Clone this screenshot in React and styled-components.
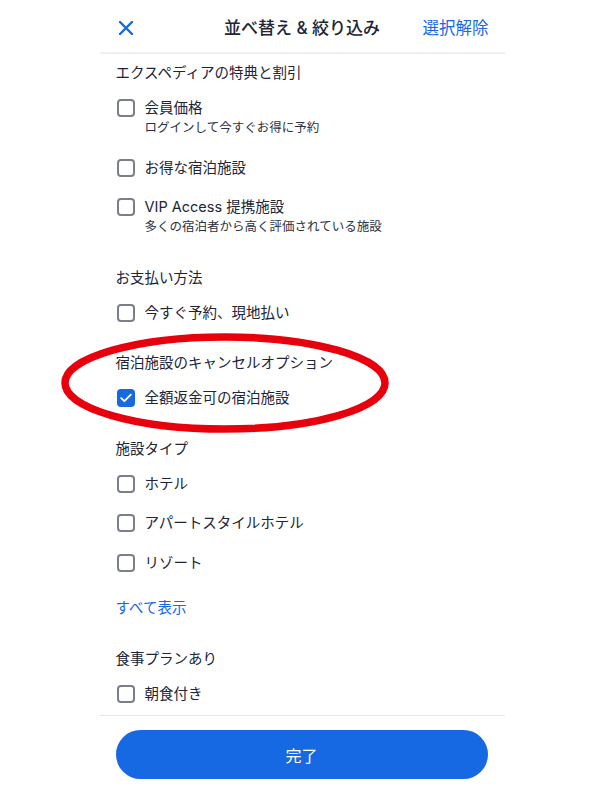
import React from 'react'
import styled, { createGlobalStyle } from 'styled-components'

const GlobalStyle = createGlobalStyle`
  html, body {
    margin: 0;
    padding: 0;
    background: #ffffff;
  }
  body {
    font-family: "Inter", "Noto Sans CJK JP", sans-serif;
    color: #202436;
    -webkit-font-smoothing: antialiased;
  }
  * { box-sizing: border-box; }
`

const BLUE = '#1668e3'

const sections = [
  {
    title: 'エクスペディアの特典と割引',
    items: [
      { label: '会員価格', sub: 'ログインして今すぐお得に予約' },
      { label: 'お得な宿泊施設' },
      { label: 'VIP Access 提携施設', sub: '多くの宿泊者から高く評価されている施設' },
    ],
  },
  {
    title: 'お支払い方法',
    items: [{ label: '今すぐ予約、現地払い' }],
  },
  {
    title: '宿泊施設のキャンセルオプション',
    items: [{ label: '全額返金可の宿泊施設', checked: true }],
  },
  {
    title: '施設タイプ',
    items: [
      { label: 'ホテル' },
      { label: 'アパートスタイルホテル' },
      { label: 'リゾート' },
    ],
    more: 'すべて表示',
  },
  {
    title: '食事プランあり',
    items: [{ label: '朝食付き' }],
  },
]

const Checkbox = ({ checked }) => (
  <Box $checked={checked}>
    {checked && (
      <svg width="12" height="10" viewBox="0 0 12 10" fill="none">
        <path d="M1.2 5.2 L4.4 8.2 L10.8 1.6" stroke="#fff" strokeWidth="1.8" strokeLinecap="round" strokeLinejoin="round" />
      </svg>
    )}
  </Box>
)

const App = () => {
  return (
    <Page>
      <GlobalStyle />
      <Panel>
        <Header>
          <CloseButton aria-label="閉じる">
            <svg width="14" height="14" viewBox="0 0 14 14" fill="none">
              <path d="M1 1 L13 13 M13 1 L1 13" stroke={BLUE} strokeWidth="2.4" strokeLinecap="round" />
            </svg>
          </CloseButton>
          <HeaderTitle>並べ替え &amp; 絞り込み</HeaderTitle>
          <ClearLink>選択解除</ClearLink>
        </Header>

        <Scroll>
          {sections.map(section => (
            <Section key={section.title}>
              <SectionTitle>{section.title}</SectionTitle>
              {section.items.map(item => (
                <Row key={item.label}>
                  <Checkbox checked={item.checked} />
                  <RowText>
                    <Label>{item.label}</Label>
                    {item.sub && <Sub>{item.sub}</Sub>}
                  </RowText>
                </Row>
              ))}
              {section.more && <MoreLink>{section.more}</MoreLink>}
            </Section>
          ))}
        </Scroll>

        <Footer>
          <DoneButton>完了</DoneButton>
        </Footer>
      </Panel>

      {/* hand-drawn highlight over the cancel option */}
      <Highlight width="334" height="106" viewBox="0 0 334 106">
        <ellipse cx="167" cy="53" rx="160" ry="46" fill="none" stroke="#e8000d" strokeWidth="7.5" />
      </Highlight>
    </Page>
  )
}

const Page = styled.div`
  position: relative;
  width: 100%;
  min-height: 804px;
`

const Panel = styled.div`
  width: 405px;
  height: 804px;
  margin: 0 auto;
  display: flex;
  flex-direction: column;
  background: #fff;
`

const Header = styled.header`
  height: 54px;
  padding: 3px 16px 0;
  display: grid;
  grid-template-columns: 1fr auto 1fr;
  align-items: center;
  border-bottom: 2px solid #efefef;
`

const CloseButton = styled.button`
  justify-self: start;
  background: none;
  border: none;
  padding: 0 0 0 3px;
  display: flex;
  align-items: center;
  cursor: pointer;
`

const HeaderTitle = styled.h1`
  margin: 0;
  font-size: 17px;
  font-weight: 500;
  line-height: 22px;
  color: #202436;
`

const ClearLink = styled.span`
  justify-self: end;
  font-size: 16.5px;
  line-height: 22px;
  color: ${BLUE};
`

const Scroll = styled.div`
  flex: 1;
  min-height: 0;
  overflow: hidden;
  padding: 0 16px;
`

const Section = styled.section`
  padding-top: 21px;

  &:first-child {
    padding-top: 9px;
  }
`

const SectionTitle = styled.h2`
  margin: 0 0 5px;
  font-size: 14.5px;
  font-weight: 400;
  line-height: 20px;
  color: #202436;
`

const Row = styled.div`
  display: flex;
  align-items: flex-start;
  gap: 10px;
  padding: 10px 0 9.5px 1px;
`

const Box = styled.span`
  flex: none;
  width: 18px;
  height: 18px;
  margin-top: 1px;
  border-radius: 4px;
  border: 2px solid ${p => (p.$checked ? BLUE : '#7b7e8b')};
  background: ${p => (p.$checked ? BLUE : '#fff')};
  display: flex;
  align-items: center;
  justify-content: center;
`

const RowText = styled.div`
  display: flex;
  flex-direction: column;
`

const Label = styled.span`
  font-size: 14.5px;
  line-height: 20px;
  color: #202436;
`

const Sub = styled.span`
  font-size: 12.5px;
  line-height: 20px;
  color: #2c3040;
`

const MoreLink = styled.div`
  margin: 16px 0 10px;
  font-size: 14.5px;
  line-height: 20px;
  color: ${BLUE};
`

const Footer = styled.footer`
  flex: none;
  border-top: 1px solid #e6e6e6;
  padding: 14px 17px 25px 16px;
`

const DoneButton = styled.button`
  width: 100%;
  height: 49px;
  border: none;
  border-radius: 25px;
  background: ${BLUE};
  color: #fff;
  font-family: inherit;
  font-size: 16px;
  cursor: pointer;
`

const Highlight = styled.svg`
  position: absolute;
  left: 58px;
  top: 330px;
  pointer-events: none;
`

export default App
